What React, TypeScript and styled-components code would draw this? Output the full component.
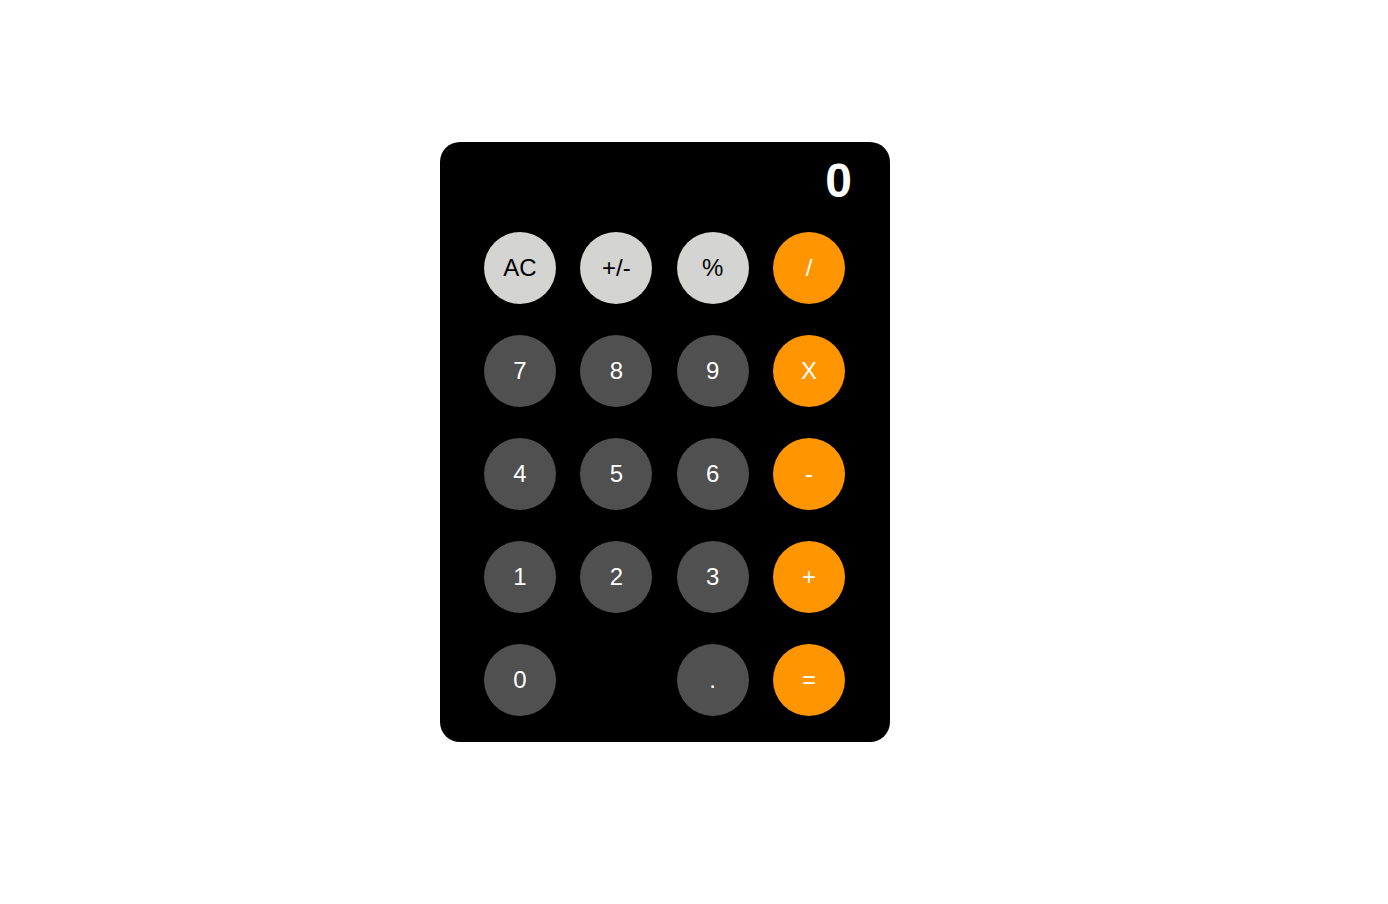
import styled, { createGlobalStyle } from "styled-components";

const GlobalStyle = createGlobalStyle`
	body {
		margin: 0;
		background: #ffffff;
		font-family: "Liberation Sans", Arial, sans-serif;
	}
`;

const Page = styled.div`
	padding: 142px 0 0 440px;
`;

const Calculator = styled.div`
	box-sizing: border-box;
	width: 450px;
	height: 600px;
	background: #000000;
	border-radius: 20px;
	padding: 11px 38px 0 44px;
`;

const Display = styled.div`
	color: #ffffff;
	font-size: 48px;
	font-weight: 700;
	line-height: 55px;
	text-align: right;
	margin-bottom: 24px;
`;

const Keys = styled.div`
	display: grid;
	grid-template-columns: repeat(4, 72px);
	grid-auto-rows: 72px;
	column-gap: 24.33px;
	row-gap: 31px;
`;

type Kind = "func" | "num" | "op";

const colors: Record<Kind, { bg: string; fg: string }> = {
	func: { bg: "#d4d4d2", fg: "#000000" },
	num: { bg: "#505050", fg: "#ffffff" },
	op: { bg: "#ff9500", fg: "#ffffff" },
};

const Key = styled.button<{ $kind: Kind; $col?: number }>`
	width: 72px;
	height: 72px;
	border: none;
	border-radius: 50%;
	padding: 0;
	display: flex;
	align-items: center;
	justify-content: center;
	font-family: "Liberation Sans", Arial, sans-serif;
	font-size: 24px;
	background: ${(p) => colors[p.$kind].bg};
	color: ${(p) => colors[p.$kind].fg};
	grid-column: ${(p) => (p.$col ? p.$col : "auto")};
	cursor: pointer;
`;

const keys: { label: string; kind: Kind; col?: number }[] = [
	{ label: "AC", kind: "func" },
	{ label: "+/-", kind: "func" },
	{ label: "%", kind: "func" },
	{ label: "/", kind: "op" },
	{ label: "7", kind: "num" },
	{ label: "8", kind: "num" },
	{ label: "9", kind: "num" },
	{ label: "X", kind: "op" },
	{ label: "4", kind: "num" },
	{ label: "5", kind: "num" },
	{ label: "6", kind: "num" },
	{ label: "-", kind: "op" },
	{ label: "1", kind: "num" },
	{ label: "2", kind: "num" },
	{ label: "3", kind: "num" },
	{ label: "+", kind: "op" },
	{ label: "0", kind: "num" },
	{ label: ".", kind: "num", col: 3 },
	{ label: "=", kind: "op" },
];

export default function App() {
	return (
		<>
			<GlobalStyle />
			<Page>
				<Calculator>
					<Display>0</Display>
					<Keys>
						{keys.map((k) => (
							<Key key={k.label} $kind={k.kind} $col={k.col}>
								{k.label}
							</Key>
						))}
					</Keys>
				</Calculator>
			</Page>
		</>
	);
}
